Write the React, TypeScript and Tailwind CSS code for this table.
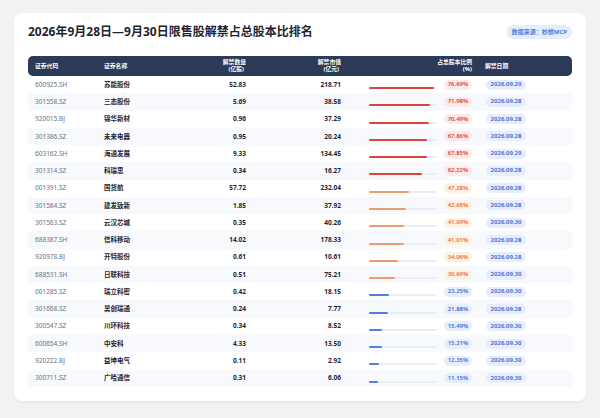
import React from 'react';
import clsx from 'clsx';

interface Row {
  code: string;
  name: string;
  volume: string;
  value: string;
  pct: number;
  date: string;
}

const rows: Row[] = [
  { code: '600925.SH', name: '苏能股份', volume: '52.83', value: '218.71', pct: 76.69, date: '2026.09.29' },
  { code: '301558.SZ', name: '三态股份', volume: '5.69', value: '38.58', pct: 71.98, date: '2026.09.28' },
  { code: '920015.BJ', name: '锦华新材', volume: '0.96', value: '37.29', pct: 70.49, date: '2026.09.28' },
  { code: '301386.SZ', name: '未来电器', volume: '0.95', value: '20.24', pct: 67.86, date: '2026.09.28' },
  { code: '603162.SH', name: '海通发展', volume: '9.33', value: '134.45', pct: 67.85, date: '2026.09.29' },
  { code: '301314.SZ', name: '科瑞思', volume: '0.34', value: '16.27', pct: 62.22, date: '2026.09.28' },
  { code: '001391.SZ', name: '国货航', volume: '57.72', value: '232.04', pct: 47.28, date: '2026.09.28' },
  { code: '301584.SZ', name: '建发致新', volume: '1.85', value: '37.92', pct: 43.68, date: '2026.09.28' },
  { code: '301563.SZ', name: '云汉芯城', volume: '0.35', value: '40.26', pct: 41.09, date: '2026.09.30' },
  { code: '688387.SH', name: '信科移动', volume: '14.02', value: '178.33', pct: 41.01, date: '2026.09.28' },
  { code: '920978.BJ', name: '开特股份', volume: '0.61', value: '10.61', pct: 34.06, date: '2026.09.28' },
  { code: '688531.SH', name: '日联科技', volume: '0.51', value: '75.21', pct: 30.69, date: '2026.09.30' },
  { code: '001285.SZ', name: '瑞立科密', volume: '0.42', value: '18.15', pct: 23.25, date: '2026.09.30' },
  { code: '301668.SZ', name: '昊创瑞通', volume: '0.24', value: '7.77', pct: 21.88, date: '2026.09.28' },
  { code: '300547.SZ', name: '川环科技', volume: '0.34', value: '8.52', pct: 15.49, date: '2026.09.30' },
  { code: '600654.SH', name: '中安科', volume: '4.33', value: '13.50', pct: 15.21, date: '2026.09.30' },
  { code: '920222.BJ', name: '益坤电气', volume: '0.11', value: '2.92', pct: 12.35, date: '2026.09.30' },
  { code: '300711.SZ', name: '广哈通信', volume: '0.31', value: '6.06', pct: 11.15, date: '2026.09.30' },
];

const cols = 'grid grid-cols-[69px_90px_52px_95px_96px_35px_1fr]';

function level(pct: number) {
  if (pct >= 60) return 'high';
  if (pct >= 30) return 'mid';
  return 'low';
}

export default function App() {
  return (
    <div
      className="w-[600px] h-[418px] bg-[#f1f2f4] pt-[13px] px-[14px]"
      style={{ fontFamily: '"Noto Sans", "Noto Sans CJK SC", sans-serif' }}
    >
      <div className="h-[388px] bg-white rounded-[8px] shadow-[0_1px_3px_rgba(0,0,0,0.06)] px-[14px] pt-[11px]">
        {/* Title row */}
        <div className="flex items-center justify-between h-[16px] mb-[16px]">
          <h1 className="text-[12px] font-bold text-[#1f2430] leading-none">
            2026年9月28日—9月30日限售股解禁占总股本比排名
          </h1>
          <span className="h-[14px] px-[5px] rounded-full bg-[#e4edfd] text-[#4a7ce0] text-[6px] font-bold flex items-center">
            数据来源：妙想MCP
          </span>
        </div>

        {/* Header */}
        <div className={clsx(cols, 'h-[20px] bg-[#2b3a56] rounded-[5px] pl-[7px] text-white text-[5.8px] font-bold items-center leading-[7px]')}>
          <div>证券代码</div>
          <div>证券名称</div>
          <div className="text-right">
            <div>解禁数量</div>
            <div className="pr-[2px]">(亿股)</div>
          </div>
          <div className="text-right">
            <div>解禁市值</div>
            <div className="pr-[2px]">(亿元)</div>
          </div>
          <div />
          <div className="text-right whitespace-nowrap">
            <div>占总股本比例</div>
            <div>(%)</div>
          </div>
          <div className="pl-[13px]">解禁日期</div>
        </div>

        {/* Rows */}
        <div>
          {rows.map((r, i) => {
            const lv = level(r.pct);
            return (
              <div
                key={r.code}
                className={clsx(cols, 'h-[17.28px] pl-[7px] items-center text-[6.5px]', i % 2 === 1 ? 'bg-[#f7f9fc]' : 'bg-white')}
              >
                <div className="text-[#6b7280]">{r.code}</div>
                <div className="font-bold text-[#1f2430]">{r.name}</div>
                <div className="text-right font-bold text-[#1f2430]">{r.volume}</div>
                <div className="text-right font-bold text-[#1f2430]">{r.value}</div>
                <div className="pl-[28px] pt-[7px]">
                  <div className="h-[2px] w-[68px] rounded-full bg-[#e9eef5]">
                    <div
                      className={clsx(
                        'h-[2px] rounded-full',
                        lv === 'high' && 'bg-[#d9443b]',
                        lv === 'mid' && 'bg-[#ef9b6d]',
                        lv === 'low' && 'bg-[#4f80e1]'
                      )}
                      style={{ width: `${Math.min(100, (r.pct / 80) * 100)}%` }}
                    />
                  </div>
                </div>
                <div className="flex justify-end">
                  <span
                    className={clsx(
                      'h-[10px] w-[28px] rounded-full flex items-center justify-center text-[6px] font-semibold',
                      lv === 'high' && 'bg-[#fde9e7] text-[#d9463e]',
                      lv === 'mid' && 'bg-[#fdf1e2] text-[#e8743b]',
                      lv === 'low' && 'bg-[#e6eefc] text-[#3f6fd9]'
                    )}
                  >
                    {r.pct.toFixed(2)}%
                  </span>
                </div>
                <div className="pl-[14px]">
                  <span className="h-[10px] w-[40px] rounded-full bg-[#e6edfc] text-[#3b62d0] text-[6px] font-semibold flex items-center justify-center">
                    {r.date}
                  </span>
                </div>
              </div>
            );
          })}
        </div>
      </div>
    </div>
  );
}
